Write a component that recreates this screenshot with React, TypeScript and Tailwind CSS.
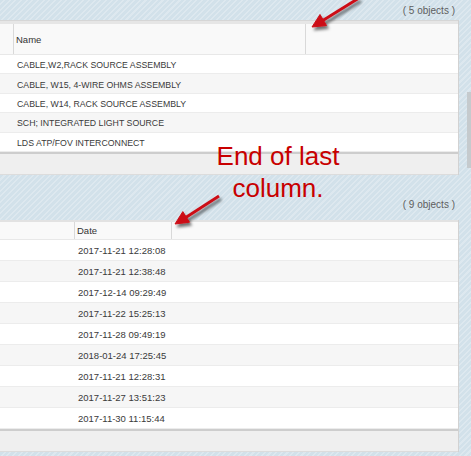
const NAMES = [
  'CABLE,W2,RACK SOURCE ASSEMBLY',
  'CABLE, W15, 4-WIRE OHMS ASSEMBLY',
  'CABLE, W14, RACK SOURCE ASSEMBLY',
  'SCH; INTEGRATED LIGHT SOURCE',
  'LDS ATP/FOV INTERCONNECT',
];

const DATES = [
  '2017-11-21 12:28:08',
  '2017-11-21 12:38:48',
  '2017-12-14 09:29:49',
  '2017-11-22 15:25:13',
  '2017-11-28 09:49:19',
  '2018-01-24 17:25:45',
  '2017-11-21 12:28:31',
  '2017-11-27 13:51:23',
  '2017-11-30 11:15:44',
];

function Arrows() {
  return (
    <svg className="pointer-events-none absolute inset-0" width="471" height="456">
      <defs>
        <filter id="shadow" x="-50%" y="-50%" width="200%" height="200%">
          <feDropShadow dx="2" dy="3" stdDeviation="1.6" floodColor="#000" floodOpacity="0.55" />
        </filter>
      </defs>
      <g filter="url(#shadow)" fill="#cc1018" stroke="#cc1018">
        <line x1="359" y1="-2" x2="322" y2="21" strokeWidth="3" />
        <polygon points="312,27 326.5,25.5 320,14.5" strokeWidth="1" strokeLinejoin="round" />
        <line x1="219" y1="196" x2="185" y2="218" strokeWidth="3" />
        <polygon points="175,224 189.5,222.2 182.8,211.6" strokeWidth="1" strokeLinejoin="round" />
      </g>
    </svg>
  );
}

export default function App() {
  return (
    <div className="relative h-[456px] w-[471px] overflow-hidden bg-[repeating-linear-gradient(135deg,#d2e1ea_0px,#d2e1ea_2.5px,#dde8ef_2.5px,#dde8ef_4px)] font-['Liberation_Sans',Arial,sans-serif]">
      <div className="flex w-[459px] flex-col">
        {/* first list */}
        <div className="flex h-[20px] items-center justify-end pr-[4px] text-[10px] text-[#5e5e5e]">
          ( 5 objects )
        </div>
        <div className="border-r border-[#d2d2d2] bg-white">
          <div className="h-[4px] border-t border-[#d6d6d6] bg-[#e6e6e6]" />
          <div className="flex h-[31px] border-b border-[#e8e8e8] bg-[#f9f9f9] text-[9.5px] text-[#333]">
            <div className="w-[14px] border-r border-[#d9d9d9]" />
            <div className="flex w-[292px] items-center border-r border-[#d9d9d9] pl-[2px] pt-[3px]">Name</div>
            <div className="flex-1" />
          </div>
          {NAMES.map((n, i) => (
            <div
              key={n}
              className={`flex h-[19.4px] items-center border-b border-[#ececec] pl-[17px] pt-[3px] text-[8.75px] text-[#3a3a3a] ${
                i % 2 ? 'bg-[#f6f6f6]' : 'bg-white'
              }`}
            >
              {n}
            </div>
          ))}
          <div className="h-[23px] border-t-2 border-b border-t-[#cdcdcd] border-b-[#dcdcdc] bg-[#efefef]" />
        </div>

        {/* second list */}
        <div className="flex h-[45px] items-end justify-end pr-[4px] pb-[8px] text-[10px] text-[#5e5e5e]">
          ( 9 objects )
        </div>
        <div className="border-r border-[#d2d2d2] bg-white">
          <div className="h-[2px] bg-[#e2e2e2]" />
          <div className="flex h-[18px] border-b border-[#e8e8e8] bg-[#f9f9f9] text-[9.5px] text-[#333]">
            <div className="w-[75px] border-r border-[#d9d9d9]" />
            <div className="flex w-[97px] items-center border-r border-[#d9d9d9] pl-[2px] pt-[2px]">Date</div>
            <div className="flex-1" />
          </div>
          {DATES.map((d, i) => (
            <div
              key={d}
              className={`flex h-[21px] items-center border-b border-[#ececec] pl-[78px] pt-[3px] text-[9.5px] text-[#3a3a3a] ${
                i % 2 ? 'bg-[#f6f6f6]' : 'bg-white'
              }`}
            >
              {d}
            </div>
          ))}
          <div className="h-[23px] border-t-2 border-b border-t-[#cdcdcd] border-b-[#dcdcdc] bg-[#efefef]" />
        </div>
      </div>

      {/* scrollbar thumb */}
      <div className="absolute right-0 top-[92px] h-[76px] w-[4px] bg-[#c5cacd]" />

      {/* annotation */}
      <div className="absolute left-[198px] top-[140px] w-[160px] text-center text-[26px] leading-[32px] text-[#c80000]">
        End of last
        <br />
        column.
      </div>
      <Arrows />
    </div>
  );
}
